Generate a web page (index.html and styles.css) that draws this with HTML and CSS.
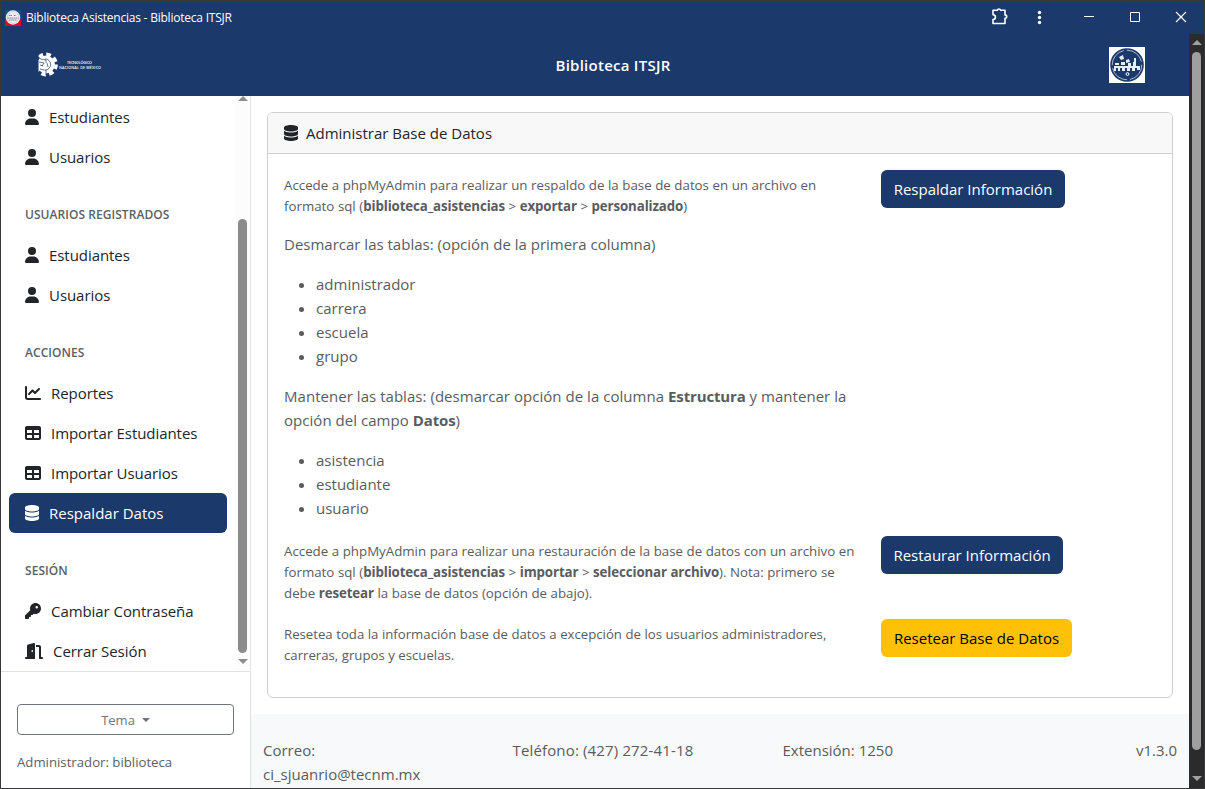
FILE: index.html
```html
<!DOCTYPE html>
<html lang="es">
<head>
<meta charset="utf-8">
<title>Biblioteca Asistencias - Biblioteca ITSJR</title>
<link rel="stylesheet" href="styles.css">
</head>
<body>
<svg class="sprite" aria-hidden="true">
  <symbol id="user" viewBox="0 0 448 512"><path d="M224 256A128 128 0 1 0 224 0a128 128 0 1 0 0 256zm-45.700 48C79.800 304 0 383.800 0 482.300C0 498.700 13.300 512 29.700 512H418.300c16.400 0 29.700-13.300 29.700-29.700C448 383.800 368.200 304 269.700 304H178.300z"/></symbol>
  <symbol id="chart" viewBox="0 0 512 512"><path d="M64 64c0-17.700-14.300-32-32-32S0 46.300 0 64V400c0 44.200 35.800 80 80 80H480c17.700 0 32-14.300 32-32s-14.300-32-32-32H80c-8.800 0-16-7.200-16-16V64zm406.600 86.600c12.500-12.500 12.500-32.800 0-45.300s-32.800-12.500-45.300 0L320 210.700l-57.400-57.400c-12.500-12.500-32.800-12.500-45.300 0l-112 112c-12.500 12.500-12.500 32.800 0 45.300s32.800 12.500 45.300 0L240 221.300l57.400 57.400c12.500 12.500 32.800 12.500 45.300 0l128-128z"/></symbol>
  <symbol id="table" viewBox="0 0 512 512"><path d="M64 256V160H224v96H64zm0 64H224v96H64V320zm224 96V320H448v96H288zM448 256H288V160H448v96zM64 32C28.700 32 0 60.700 0 96V416c0 35.300 28.700 64 64 64H448c35.300 0 64-28.700 64-64V96c0-35.300-28.700-64-64-64H64z"/></symbol>
  <symbol id="database" viewBox="0 0 448 512"><path d="M448 80v48c0 44.200-100.300 80-224 80S0 172.200 0 128V80C0 35.800 100.300 0 224 0S448 35.800 448 80zM393.200 214.700c20.800-7.400 39.900-16.900 54.800-28.600V288c0 44.200-100.300 80-224 80S0 332.200 0 288V186.100c14.900 11.800 34 21.200 54.800 28.600C99.700 230.700 159.500 240 224 240s124.300-9.300 169.200-25.300zM0 346.100c14.900 11.800 34 21.200 54.800 28.600C99.700 390.700 159.500 400 224 400s124.300-9.300 169.200-25.300c20.800-7.400 39.900-16.900 54.800-28.600V432c0 44.200-100.300 80-224 80S0 476.200 0 432V346.100z"/></symbol>
  <symbol id="key" viewBox="0 0 512 512"><path d="M336 352c97.200 0 176-78.800 176-176S433.200 0 336 0S160 78.800 160 176c0 18.700 2.900 36.800 8.300 53.700L7 391c-4.500 4.500-7 10.600-7 17v80c0 13.300 10.700 24 24 24h80c13.300 0 24-10.700 24-24V448h40c13.300 0 24-10.700 24-24V384h40c6.400 0 12.500-2.500 17-7l33.300-33.300c16.900 5.400 35 8.300 53.700 8.300zM376 96a40 40 0 1 1 0 80 40 40 0 1 1 0-80z"/></symbol>
  <symbol id="door" viewBox="0 0 576 512"><path d="M320 32c0-9.900-4.500-19.200-12.300-25.200S289.800-1.400 280.200 1l-179.900 45C79 51.300 64 70.500 64 92.500V448H32c-17.700 0-32 14.300-32 32s14.300 32 32 32H320V32zM256 256c0 17.700-10.700 32-24 32s-24-14.300-24-32s10.700-32 24-32s24 14.300 24 32zm96-128h96V480c0 17.700 14.300 32 32 32h64c17.700 0 32-14.300 32-32s-14.300-32-32-32H512V128c0-35.300-28.700-64-64-64H352v64z"/></symbol>
</svg>

<div class="window">
  <div class="titlebar">
    <svg class="app-icon" viewBox="0 0 16 16"><path fill="#174b91" d="M0 0h16v10H0z"/><path fill="#e30620" d="M0 10h16v6H0z"/><circle cx="8" cy="7.500" r="7.200" fill="#eef0f3"/><circle cx="8" cy="7.500" r="5.800" fill="none" stroke="#c4c8d0" stroke-width=".8"/><path d="M2.500 8h11M4 5.500h3m2 0h2M4 10h8" stroke="#77798a" stroke-dasharray="1.500 .5"/></svg>
    <span class="app-name">Biblioteca Asistencias - Biblioteca ITSJR</span>
    <svg class="window-controls" viewBox="0 0 215 32" fill="none" stroke="#fff">
      <path stroke-width="1.600" stroke-linejoin="round" d="M3 9.200h4.300a1.800 1.800 0 0 1 3.400 0H15v4.700a1.700 1.700 0 0 1 0 3.400V22.500H3v-4a2.300 2.300 0 0 0 0-4.800z"/>
      <g fill="#fff" stroke="none"><circle cx="49.500" cy="11.500" r="1.700"/><circle cx="49.500" cy="16.500" r="1.700"/><circle cx="49.500" cy="21.500" r="1.700"/></g>
      <path d="M94 15.500h10"/><path d="M140.500 11.500h9v9h-9z"/><path stroke-width="1.200" d="m186 11 10 10m0-10-10 10"/>
    </svg>
  </div>

  <div class="page">
    <header class="topbar">
      <svg class="tecnm" viewBox="0 0 66 26">
        <circle cx="9" cy="12.500" r="10.200" fill="none" stroke="#fff" stroke-width="3.400" stroke-dasharray="4.700 3.310"/>
        <circle cx="9" cy="12.500" r="9" fill="#fff"/>
        <path fill="#1b396a" d="M-3 0h4.500v26H-3z"/>
        <circle cx="8" cy="12.500" r="5.600" fill="none" stroke="#1b396a" stroke-width=".7" stroke-dasharray="18 17" transform="rotate(-90 8 12.500)"/>
        <path d="m2 6 3 1.500 4 .5M2 10l5 1-2 3m5-3 1 4m-8 2 4 1m2-10v3m-6 2 3 1m3 4v5" fill="none" stroke="#1b396a" stroke-width=".7"/>
        <text x="30" y="12" textLength="25">TECNOLÓGICO</text><text x="22" y="16.500" textLength="42">NACIONAL DE MÉXICO</text>
      </svg>
      <h1>Biblioteca ITSJR</h1>
      <svg class="seal" viewBox="0 0 36 36"><path fill="#fff" d="M0 0h36v36H0z"/><circle cx="18" cy="18" r="16.800" fill="#1b396a"/><circle cx="18" cy="18" r="14.800" fill="none" stroke="#b9c5d7" stroke-width=".9" stroke-dasharray="20 3"/><path fill="#e7edf5" d="m10 10 4-2 1 4-3 1zM17 13l3-1 1 3-4 1zM25 11h2v5h-2zM6 16h4v2H6zm6-1h4v3h-4zm7 1h3v3h-3zm5-1h3v4h-3zM5 19h26v2H5zm0 2h2v3H5zm4 0h2v3H9zm4 0h3v3h-3zm5 0h3v3h-3zm5 0h3v3h-3zm5 0h3v2h-3z"/><circle cx="18.500" cy="27" r="1.400" fill="none" stroke="#fff"/></svg>
    </header>

    <div class="body">
      <aside class="sidebar">
        <div class="nav-area">
          <nav class="nav">
            <a class="item"><svg class="i14"><use href="#user"/></svg><span>Estudiantes</span></a>
            <a class="item"><svg class="i14"><use href="#user"/></svg><span>Usuarios</span></a>
            <h2>USUARIOS REGISTRADOS</h2>
            <a class="item"><svg class="i14"><use href="#user"/></svg><span>Estudiantes</span></a>
            <a class="item"><svg class="i14"><use href="#user"/></svg><span>Usuarios</span></a>
            <h2>ACCIONES</h2>
            <a class="item"><svg class="i16"><use href="#chart"/></svg><span>Reportes</span></a>
            <a class="item"><svg class="i16"><use href="#table"/></svg><span>Importar Estudiantes</span></a>
            <a class="item"><svg class="i16"><use href="#table"/></svg><span>Importar Usuarios</span></a>
            <a class="item active"><svg class="i14"><use href="#database"/></svg><span>Respaldar Datos</span></a>
            <h2>SESIÓN</h2>
            <a class="item"><svg class="i16"><use href="#key"/></svg><span>Cambiar Contraseña</span></a>
            <a class="item"><svg class="i18"><use href="#door"/></svg><span>Cerrar Sesión</span></a>
          </nav>
          <div class="scroll scroll-nav"><i class="up"></i><i class="thumb"></i><i class="down"></i></div>
        </div>
        <div class="account">
          <button class="theme">Tema<i class="caret"></i></button>
          <p>Administrador: biblioteca</p>
        </div>
      </aside>

      <div class="content">
        <main class="card">
          <div class="card-head"><svg class="i14"><use href="#database"/></svg><span>Administrar Base de Datos</span></div>
          <div class="card-body">
            <div class="copy">
              <p class="small">Accede a phpMyAdmin para realizar un respaldo de la base de datos en un archivo en<br>formato sql (<b>biblioteca_asistencias</b> &gt; <b>exportar</b> &gt; <b>personalizado</b>)</p>
              <p>Desmarcar las tablas: (opción de la primera columna)</p>
              <ul><li>administrador</li><li>carrera</li><li>escuela</li><li>grupo</li></ul>
              <p class="keep">Mantener las tablas: (desmarcar opción de la columna <b>Estructura</b> y mantener la<br>opción del campo <b>Datos</b>)</p>
              <ul><li>asistencia</li><li>estudiante</li><li>usuario</li></ul>
            </div>
            <div><button class="btn b1">Respaldar Información</button></div>
            <div class="copy">
              <p class="small">Accede a phpMyAdmin para realizar una restauración de la base de datos con un archivo en<br>formato sql (<b>biblioteca_asistencias</b> &gt; <b>importar</b> &gt; <b>seleccionar archivo</b>). Nota: primero se<br>debe <b>resetear</b> la base de datos (opción de abajo).</p>
            </div>
            <div><button class="btn b2">Restaurar Información</button></div>
            <div class="copy">
              <p class="small reset">Resetea toda la información base de datos a excepción de los usuarios administradores,<br>carreras, grupos y escuelas.</p>
            </div>
            <div><button class="btn warning">Resetear Base de Datos</button></div>
          </div>
        </main>
        <footer class="footer">
          <span>Correo:<br>ci_sjuanrio@tecnm.mx</span><span class="phone">Teléfono: (427) 272-41-18</span><span>Extensión: 1250</span><span class="version">v1.3.0</span>
        </footer>
      </div>
    </div>
  </div>
  <div class="scroll scroll-page"><i class="up"></i><i class="thumb"></i><i class="down"></i></div>
</div>
</body>
</html>
```
FILE: styles.css
```css
* { box-sizing: border-box; }
body {
  margin: 0;
  width: 1205px;
  height: 789px;
  overflow: hidden;
  background: #4b4b4d;
  color: #212529;
  font: 15px/24px "Open Sans", "Noto Sans", sans-serif;
}
h1, h2, p, ul { margin: 0; }
svg { display: block; flex: none; fill: currentColor; }
button { font-family: inherit; }
.sprite { display: none; }

.window {
  height: 789px;
  padding: 1px;
  display: grid;
  grid-template: 33px 754px / 1188px 15px;
  background: #38383b;
}
.titlebar {
  grid-column: 1 / 3;
  display: flex;
  align-items: center;
  padding-left: 4px;
  background: #1b396a;
  color: #fff;
}
.app-icon { width: 16px; height: 16px; margin-right: 5px; }
.app-name { font-size: 12px; letter-spacing: -.22px; white-space: nowrap; }
.window-controls { width: 215px; height: 32px; margin: 0 -1px 1px auto; fill: none; }

.page { display: flex; flex-direction: column; background: #fff; overflow: hidden; }
.topbar {
  height: 62px;
  flex: none;
  display: grid;
  grid-template-columns: 66px 1fr 36px;
  align-items: center;
  padding: 0 44px 0 36px;
  background: #1b396a;
  color: #fff;
}
.tecnm { width: 66px; height: 26px; }
.tecnm text { font: 600 3.7px "Open Sans", sans-serif; }
.topbar h1 { text-align: center; font-size: 15px; letter-spacing: .25px; font-weight: 600; padding-left: 14px; }
.seal { width: 36px; height: 36px; }

.body { flex: 1; display: grid; grid-template-columns: 250px 938px; min-height: 0; }
.sidebar { border-right: 1px solid #dee2e6; display: flex; flex-direction: column; min-height: 0; }
.nav-area { height: 576px; flex: none; display: flex; border-bottom: 1px solid #dee2e6; }
.nav { width: 234px; padding: 1px 8px 0; letter-spacing: -.06px; }
.item { display: flex; align-items: center; height: 40px; padding: 0 16px; gap: 10px; border-radius: 6px; white-space: nowrap; }
.item.active { background: #1b396a; color: #fff; letter-spacing: 0; }
.nav h2 { height: 58px; padding: 26px 16px 0; font-size: 12px; font-weight: 600; color: #5c6065; letter-spacing: .05px; white-space: nowrap; }
.i14 { width: 14px; height: 16px; }
.i16 { width: 16px; height: 16px; }
.i18 { width: 18px; height: 16px; }

.scroll { width: 15px; display: flex; flex-direction: column; align-items: center; }
.scroll .up { border: 5px solid transparent; border-top: 0; border-bottom: 5px solid #8b8b8b; }
.scroll .down { border: 5px solid transparent; border-bottom: 0; border-top: 5px solid #8b8b8b; }
.thumb { width: 9px; border-radius: 5px; background: #8b8b8b; }
.scroll-nav { background: #fcfcfc; }
.scroll-nav .thumb { height: 434px; margin: 118px 0 6px; }
.scroll-page { background: #2b2b2b; padding-top: 6px; }
.scroll-page .thumb { height: 698px; margin: 7px 0 26px; background: #9f9f9f; }
.scroll-page .up { border-bottom-color: #9f9f9f; }
.scroll-page .down { border-top-color: #9f9f9f; }

.account { padding: 32px 16px 0; color: #5c6065; font-size: 13.2px; }
.theme {
  width: 217px;
  height: 31px;
  display: flex;
  align-items: center;
  justify-content: center;
  gap: 7px;
  border: 1px solid #6c757d;
  border-radius: 4px;
  background: #fff;
  color: #6c757d;
  font-size: 13px;
}
.caret { border: 4px solid transparent; border-top-color: #6c757d; border-bottom: 0; }
.account p { margin-top: 15px; }

.content { display: flex; flex-direction: column; padding-top: 16px; min-height: 0; }
.card { width: 906px; height: 586px; flex: none; margin: 0 16px; border: 1px solid #cfcfcf; border-radius: 6px; }
.card-head { height: 41px; display: flex; align-items: center; gap: 8px; padding: 0 16px; background: #f8f8f8; border-bottom: 1px solid #cfcfcf; border-radius: 5px 5px 0 0; }
.card-body { padding: 16px; display: grid; grid-template-columns: 597px 1fr; grid-template-rows: 366px 83px 47px; color: #595c5f; }
.copy { padding-top: 5px; white-space: nowrap; }
.copy p { margin-bottom: 16px; }
.copy .small { font-size: 13.3px; line-height: 21px; margin-bottom: 15px; }
.copy .small b { letter-spacing: -.12px; }
.copy .small { word-spacing: .1px; }
.copy .keep { letter-spacing: .04px; }
.copy .keep b { letter-spacing: -.15px; }
.copy .reset { font-size: 13.2px; }
.copy ul { padding-left: 32px; margin-bottom: 16px; }
.btn { height: 38px; padding: 0; width: 184px; border: 0; border-radius: 6px; background: #1b396a; color: #fff; font-size: 15px; white-space: nowrap; }
.b2 { width: 182px; }
.warning { width: 191px; background: #ffc107; color: #000; }

.footer { flex: 1; margin-top: 16px; padding: 24px 12px 0; display: grid; grid-template-columns: 249.5px 270px 270px 1fr; background: #f8f9fa; color: #595c5f; white-space: nowrap; }
.phone { letter-spacing: .15px; }
.version { text-align: right; }
```
